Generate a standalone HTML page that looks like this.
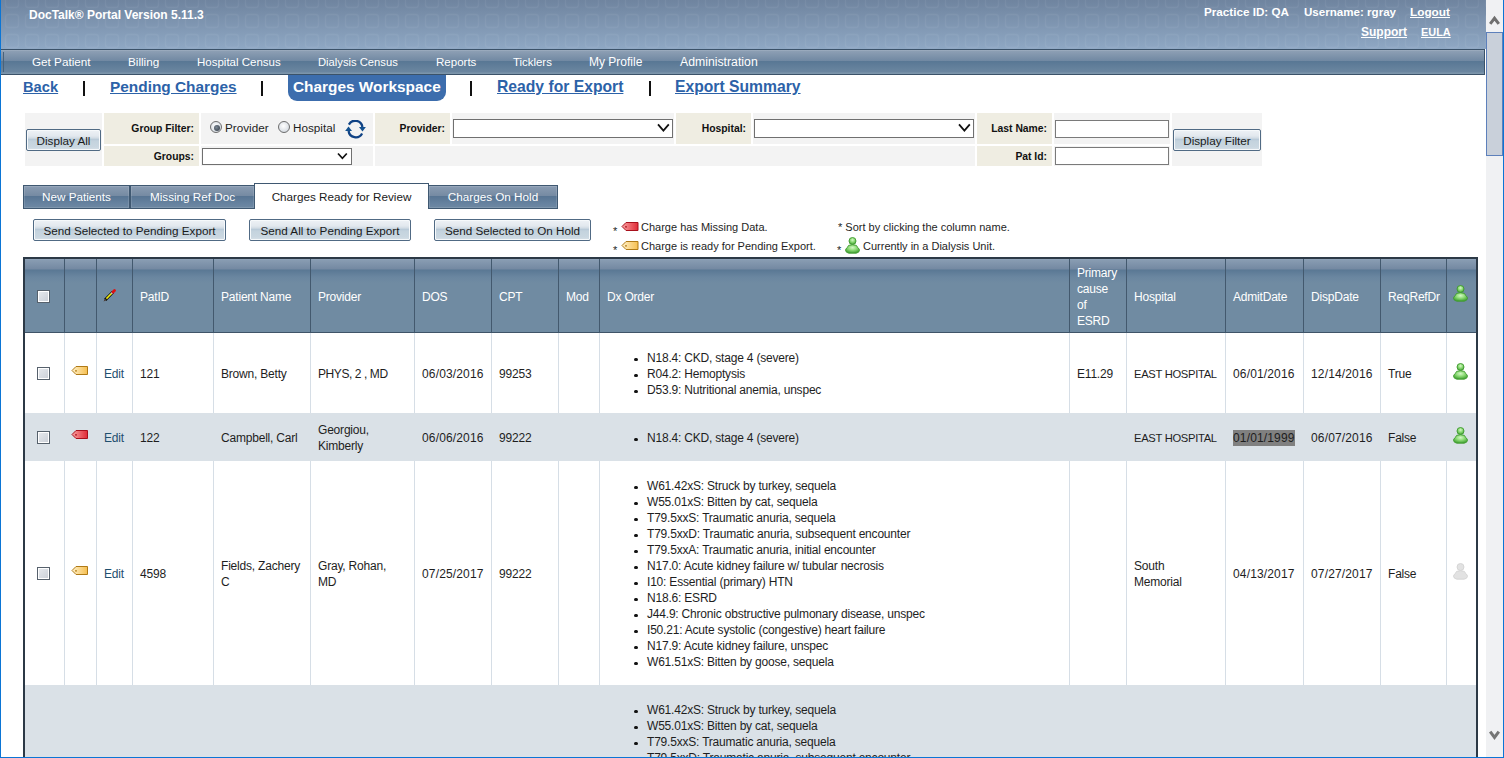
<!DOCTYPE html>
<html><head><meta charset="utf-8">
<style>
*{box-sizing:border-box;margin:0;padding:0}
html,body{width:1504px;height:758px;overflow:hidden;background:#fff;font-family:"Liberation Sans",sans-serif;color:#1e1e1e}
.a{position:absolute}
#win{position:absolute;left:0;top:0;width:1504px;height:758px;overflow:hidden}
#hdr{left:1px;top:0;width:1485px;height:49px;background:linear-gradient(#6f849f,#8fa8c4)}
#nav{left:1px;top:49px;width:1484px;height:26px;border-top:1px solid #3b5269;border-bottom:1px solid #3b5269;border-right:1px solid #3b5269;
 background:linear-gradient(#a5b4c5 0px,#8d9fb4 1px,#7088a2 11px,#587794 11px,#6b86a0 22px,#7c95ab 23px)}
.nav{top:55px;font-size:11.7px;color:#fff;white-space:nowrap;line-height:14px}
.hl{font-weight:bold;color:#fff;font-size:12px;white-space:nowrap;line-height:14px}
.lk{top:78px;font-size:15.4px;font-weight:bold;color:#2c62a8;text-decoration:underline;white-space:nowrap;line-height:18px}
.sep{top:77px;font-size:17px;font-weight:bold;color:#111;line-height:20px}
.cell{position:absolute;background:#f3f3f3}
.lab{position:absolute;background:#efede2;font-weight:bold;font-size:10.35px;text-align:right;color:#111;white-space:nowrap}
.sel{position:absolute;background:#fff;border:1px solid #707070}
.inp{position:absolute;background:#fff;border:1px solid #7a7a7a}
.btn{position:absolute;border:1px solid #506a84;border-radius:2px;padding-top:1px;box-shadow:inset 0 0 0 1px #f6f9fb;background:linear-gradient(#eef2f6 0px,#e2e8ee 6px,#d2dce5 8px,#b9cad8 9.5px,#c4d3de 11px,#cad7e1 17px,#d8e1e8 20px);color:#111;font-size:11.7px;color:#1a1a1a;text-align:center;white-space:nowrap}
.tab{position:absolute;top:185px;height:24px;border:1px solid #3f5871;background:linear-gradient(#8a9cb2 0px,#768ba3 9.5px,#587593 10.5px,#6783a0 18px,#6e89a2 22px);box-shadow:inset 0 0 0 1px rgba(255,255,255,0.13);color:#fff;font-size:11.7px;text-align:center;line-height:22px;white-space:nowrap}
.td,.th{font-size:12px;letter-spacing:-0.2px;line-height:16px;white-space:nowrap;color:#1e1e1e}
.th{color:#fff}
.bu{left:634px;width:3.6px;height:3.6px;border-radius:50%;background:#111}
.ed{color:#1f4f6e}
.cb{width:13px;height:13px;border:1px solid #56616c;box-shadow:inset 0 0 0 1px #fff;background:linear-gradient(135deg,#e8ebef,#c9ced6)}
.rad{width:12px;height:12px;border-radius:50%;border:1px solid #6d6d6d;background:radial-gradient(circle at 45% 40%,#ffffff,#c9d0d8)}
.fl{font-size:11.7px;color:#1e1e1e;white-space:nowrap;line-height:14px}
.leg{position:absolute;line-height:14px;font-size:11px;color:#1e1e1e;white-space:nowrap}
</style></head><body>
<div id="win">
<div class="a" id="hdr"></div>
<svg class="a" style="left:1px;top:0" width="1485" height="49"><defs><pattern id="hp" x="0" y="0" width="20" height="20" patternUnits="userSpaceOnUse"><rect x="4.5" y="14.5" width="13" height="13" rx="3" fill="none" stroke="rgba(255,255,255,0.05)" stroke-width="1.3"/><rect x="4.5" y="-5.5" width="13" height="13" rx="3" fill="none" stroke="rgba(255,255,255,0.05)" stroke-width="1.3"/></pattern></defs><rect width="1485" height="49" fill="url(#hp)"/></svg>
<div class="a hl" style="left:29px;top:8px">DocTalk® Portal Version 5.11.3</div>
<div class="a hl" style="left:1204px;top:5px;font-size:11.68px">Practice ID: QA</div>
<div class="a hl" style="left:1304px;top:5px;font-size:11.58px">Username: rgray</div>
<div class="a hl" style="left:1410px;top:5px;font-size:11.8px;text-decoration:underline">Logout</div>
<div class="a hl" style="left:1361px;top:25px;font-size:12px;text-decoration:underline">Support</div>
<div class="a hl" style="left:1421px;top:25px;font-size:10.9px;text-decoration:underline">EULA</div>

<div class="a" id="nav"></div>
<div class="a" style="left:3px;top:52px;width:1px;height:20px;background:#4a6279"></div>
<div class="a nav" style="left:32px">Get Patient</div>
<div class="a nav" style="left:128px">Billing</div>
<div class="a nav" style="left:197px;font-size:11.5px">Hospital Census</div>
<div class="a nav" style="left:318px;font-size:11.22px">Dialysis Census</div>
<div class="a nav" style="left:436px;font-size:11.54px">Reports</div>
<div class="a nav" style="left:513px;font-size:11.42px">Ticklers</div>
<div class="a nav" style="left:589px;font-size:12px">My Profile</div>
<div class="a nav" style="left:680px;font-size:12.28px">Administration</div>

<div class="a lk" style="left:23px;font-size:14.7px">Back</div>
<div class="a" style="left:83px;top:81px;width:2px;height:15px;background:#111"></div>
<div class="a lk" style="left:110px">Pending Charges</div>
<div class="a" style="left:261px;top:81px;width:2px;height:15px;background:#111"></div>
<div class="a" style="left:288px;top:75px;width:158px;height:26px;background:#3c6dad;border-radius:0 0 9px 9px"></div>
<div class="a lk" style="left:293px;color:#fff;text-decoration:none">Charges Workspace</div>
<div class="a" style="left:470px;top:81px;width:2px;height:15px;background:#111"></div>
<div class="a lk" style="left:497px;font-size:15.7px">Ready for Export</div>
<div class="a" style="left:649px;top:81px;width:2px;height:15px;background:#111"></div>
<div class="a lk" style="left:675px;font-size:15.7px">Export Summary</div>

<!-- filter table -->
<div class="cell" style="left:25px;top:113px;width:77px;height:53px"></div>
<div class="btn" style="left:26px;top:129px;width:75px;height:22px;line-height:20px">Display All</div>
<div class="lab" style="left:104px;top:113px;width:95px;height:31px;padding:10px 5px 0 0">Group Filter:</div>
<div class="cell" style="left:201px;top:113px;width:172px;height:31px"></div>
<div class="a rad" style="left:210px;top:121px"><div style="position:absolute;left:3px;top:3px;width:6px;height:6px;border-radius:50%;background:radial-gradient(circle at 40% 40%,#7b8794,#2d3640)"></div></div>
<div class="a fl" style="left:225px;top:121px">Provider</div>
<div class="a rad" style="left:278px;top:121px"></div>
<div class="a fl" style="left:293px;top:121px">Hospital</div>
<svg class="a" style="left:345px;top:120px" width="21" height="19" viewBox="0 0 21 19"><path d="M3.9 4.6 A7.2 7.2 0 0 1 17.4 7.0" fill="none" stroke="#0f4285" stroke-width="2.3"/><path d="M17.1 13.5 A7.2 7.2 0 0 1 3.6 11.0" fill="none" stroke="#0f4285" stroke-width="2.3"/><path d="M14.0 6.9 L20.9 6.9 L17.5 11.4 Z" fill="#12508f"/><path d="M0.1 11.1 L7.0 11.1 L3.5 6.6 Z" fill="#12508f"/></svg>
<div class="lab" style="left:104px;top:146px;width:95px;height:20px;padding:5px 5px 0 0">Groups:</div>
<div class="cell" style="left:201px;top:146px;width:172px;height:20px"></div>
<div class="sel" style="left:202px;top:148px;width:150px;height:17px"></div>
<svg class="a" style="left:337px;top:152px" width="11" height="9"><polyline points="1,1.5 5.4,6.3 9.8,1.5" fill="none" stroke="#111" stroke-width="1.7"/></svg>
<div class="lab" style="left:375px;top:113px;width:75px;height:31px;padding:10px 5px 0 0">Provider:</div>
<div class="cell" style="left:452px;top:113px;width:222px;height:31px"></div>
<div class="sel" style="left:453px;top:119px;width:220px;height:19px"></div>
<svg class="a" style="left:657px;top:123px" width="13" height="10"><polyline points="1,1.4 6.4,7.6 11.8,1.4" fill="none" stroke="#111" stroke-width="1.8"/></svg>
<div class="lab" style="left:676px;top:113px;width:75px;height:31px;padding:10px 5px 0 0">Hospital:</div>
<div class="cell" style="left:753px;top:113px;width:222px;height:31px"></div>
<div class="sel" style="left:754px;top:119px;width:220px;height:19px"></div>
<svg class="a" style="left:958px;top:123px" width="13" height="10"><polyline points="1,1.4 6.4,7.6 11.8,1.4" fill="none" stroke="#111" stroke-width="1.8"/></svg>
<div class="cell" style="left:375px;top:146px;width:600px;height:20px"></div>
<div class="lab" style="left:977px;top:113px;width:75px;height:31px;padding:10px 5px 0 0">Last Name:</div>
<div class="lab" style="left:977px;top:146px;width:75px;height:20px;padding:5px 5px 0 0">Pat Id:</div>
<div class="cell" style="left:1054px;top:113px;width:116px;height:31px"></div>
<div class="cell" style="left:1054px;top:146px;width:116px;height:20px"></div>
<div class="inp" style="left:1055px;top:120px;width:114px;height:18px"></div>
<div class="inp" style="left:1055px;top:147px;width:114px;height:18px"></div>
<div class="cell" style="left:1172px;top:113px;width:90px;height:53px"></div>
<div class="btn" style="left:1173px;top:129px;width:88px;height:22px;line-height:20px">Display Filter</div>

<!-- tabs -->
<div class="tab" style="left:23px;width:107px">New Patients</div>
<div class="tab" style="left:130px;width:125px">Missing Ref Doc</div>
<div class="a" style="left:254px;top:183px;width:175px;height:26px;border:1px solid #3f5871;border-bottom:none;background:#fff;color:#1a1a1a;font-size:11.7px;text-align:center;line-height:26px">Charges Ready for Review</div>
<div class="tab" style="left:428px;width:130px">Charges On Hold</div>

<div class="btn" style="left:33px;top:219px;width:193px;height:22px;line-height:20px">Send Selected to Pending Export</div>
<div class="btn" style="left:249px;top:219px;width:162px;height:22px;line-height:20px">Send All to Pending Export</div>
<div class="btn" style="left:434px;top:219px;width:157px;height:22px;line-height:20px">Send Selected to On Hold</div>

<div class="leg" style="left:613px;top:224px">*</div>
<div class="leg" style="left:613px;top:243px">*</div>
<svg class="a" style="left:621px;top:221px" width="18" height="11" viewBox="0 0 18 11"><defs><linearGradient id="lt1" x1="0" y1="0" x2="1" y2="0"><stop offset="0" stop-color="#f9a0a0"/><stop offset="1" stop-color="#e02a36"/></linearGradient></defs><path d="M1 5.5 L5 1.5 L17 1.5 L17 9.5 L5 9.5 Z" fill="url(#lt1)" stroke="#a8101c"/><circle cx="5" cy="5.8" r="0.9" fill="#a8101c"/></svg>
<svg class="a" style="left:621px;top:240px" width="18" height="11" viewBox="0 0 18 11"><defs><linearGradient id="lt2" x1="0" y1="0" x2="1" y2="0"><stop offset="0" stop-color="#fff0c8"/><stop offset="1" stop-color="#f6bf50"/></linearGradient></defs><path d="M1 5.5 L5 1.5 L17 1.5 L17 9.5 L5 9.5 Z" fill="url(#lt2)" stroke="#b07a16"/><circle cx="5" cy="5.8" r="0.9" fill="#b07a16"/></svg>
<div class="leg" style="left:641px;top:220px">Charge has Missing Data.</div>
<div class="leg" style="left:641px;top:239px">Charge is ready for Pending Export.</div>
<div class="leg" style="left:838px;top:220px">* Sort by clicking the column name.</div>
<div class="leg" style="left:837px;top:243px">*</div>
<svg class="a" style="left:845px;top:237px" width="15" height="17" viewBox="0 0 15 17"><defs><radialGradient id="lpg" cx="50%" cy="35%" r="60%"><stop offset="0" stop-color="#d6f7c8"/><stop offset="0.5" stop-color="#8fdc78"/><stop offset="1" stop-color="#4aa83a"/></radialGradient></defs><path d="M3.6 8.4 Q7.5 7 11.4 8.4 L12.8 10.6 Q14.6 12 14.5 13.4 Q14.2 15.6 11.2 16.2 L3.8 16.2 Q0.8 15.6 0.5 13.4 Q0.4 12 2.2 10.6 Z" fill="url(#lpg)" stroke="#3f9a30" stroke-width="0.9"/><circle cx="7.5" cy="4" r="3.5" fill="url(#lpg)" stroke="#3f9a30" stroke-width="0.9"/></svg>
<div class="leg" style="left:863px;top:239px">Currently in a Dialysis Unit.</div>

<!-- TABLE -->
<div class="a" style="left:23px;top:257px;width:1455px;height:2px;background:#2c3946"></div>
<div class="a" style="left:25px;top:259px;width:1451px;height:73px;background:linear-gradient(#93a6bb 0px,#889cb2 1px,#7489a2 10px,#5a7894 11px,#6a86a0 18px,#708ba2 24px,#708ba2 73px)"></div>
<div class="a" style="left:25px;top:332px;width:1451px;height:1px;background:#3f5468"></div>
<div class="a" style="left:23px;top:257px;width:2px;height:501px;background:#2c3946"></div>
<div class="a" style="left:1476px;top:257px;width:2px;height:501px;background:#2c3946"></div>
<div class="a" style="left:25px;top:333px;width:1451px;height:80px;background:#fff"></div>
<div class="a" style="left:25px;top:413px;width:1451px;height:48px;background:#dae1e7"></div>
<div class="a" style="left:25px;top:461px;width:1451px;height:224px;background:#fff"></div>
<div class="a" style="left:25px;top:685px;width:1451px;height:73px;background:#dae1e7"></div>
<div class="a" style="left:64px;top:259px;width:1px;height:73px;background:#43596e"></div>
<div class="a" style="left:96px;top:259px;width:1px;height:73px;background:#43596e"></div>
<div class="a" style="left:132px;top:259px;width:1px;height:73px;background:#43596e"></div>
<div class="a" style="left:213px;top:259px;width:1px;height:73px;background:#43596e"></div>
<div class="a" style="left:310px;top:259px;width:1px;height:73px;background:#43596e"></div>
<div class="a" style="left:414px;top:259px;width:1px;height:73px;background:#43596e"></div>
<div class="a" style="left:491px;top:259px;width:1px;height:73px;background:#43596e"></div>
<div class="a" style="left:558px;top:259px;width:1px;height:73px;background:#43596e"></div>
<div class="a" style="left:599px;top:259px;width:1px;height:73px;background:#43596e"></div>
<div class="a" style="left:1069px;top:259px;width:1px;height:73px;background:#43596e"></div>
<div class="a" style="left:1126px;top:259px;width:1px;height:73px;background:#43596e"></div>
<div class="a" style="left:1225px;top:259px;width:1px;height:73px;background:#43596e"></div>
<div class="a" style="left:1303px;top:259px;width:1px;height:73px;background:#43596e"></div>
<div class="a" style="left:1380px;top:259px;width:1px;height:73px;background:#43596e"></div>
<div class="a" style="left:1446px;top:259px;width:1px;height:73px;background:#43596e"></div>
<div class="a" style="left:64px;top:333px;width:1px;height:80px;background:#d6dee6"></div>
<div class="a" style="left:96px;top:333px;width:1px;height:80px;background:#d6dee6"></div>
<div class="a" style="left:132px;top:333px;width:1px;height:80px;background:#d6dee6"></div>
<div class="a" style="left:213px;top:333px;width:1px;height:80px;background:#d6dee6"></div>
<div class="a" style="left:310px;top:333px;width:1px;height:80px;background:#d6dee6"></div>
<div class="a" style="left:414px;top:333px;width:1px;height:80px;background:#d6dee6"></div>
<div class="a" style="left:491px;top:333px;width:1px;height:80px;background:#d6dee6"></div>
<div class="a" style="left:558px;top:333px;width:1px;height:80px;background:#d6dee6"></div>
<div class="a" style="left:599px;top:333px;width:1px;height:80px;background:#d6dee6"></div>
<div class="a" style="left:1069px;top:333px;width:1px;height:80px;background:#d6dee6"></div>
<div class="a" style="left:1126px;top:333px;width:1px;height:80px;background:#d6dee6"></div>
<div class="a" style="left:1225px;top:333px;width:1px;height:80px;background:#d6dee6"></div>
<div class="a" style="left:1303px;top:333px;width:1px;height:80px;background:#d6dee6"></div>
<div class="a" style="left:1380px;top:333px;width:1px;height:80px;background:#d6dee6"></div>
<div class="a" style="left:1446px;top:333px;width:1px;height:80px;background:#d6dee6"></div>
<div class="a" style="left:64px;top:461px;width:1px;height:224px;background:#d6dee6"></div>
<div class="a" style="left:96px;top:461px;width:1px;height:224px;background:#d6dee6"></div>
<div class="a" style="left:132px;top:461px;width:1px;height:224px;background:#d6dee6"></div>
<div class="a" style="left:213px;top:461px;width:1px;height:224px;background:#d6dee6"></div>
<div class="a" style="left:310px;top:461px;width:1px;height:224px;background:#d6dee6"></div>
<div class="a" style="left:414px;top:461px;width:1px;height:224px;background:#d6dee6"></div>
<div class="a" style="left:491px;top:461px;width:1px;height:224px;background:#d6dee6"></div>
<div class="a" style="left:558px;top:461px;width:1px;height:224px;background:#d6dee6"></div>
<div class="a" style="left:599px;top:461px;width:1px;height:224px;background:#d6dee6"></div>
<div class="a" style="left:1069px;top:461px;width:1px;height:224px;background:#d6dee6"></div>
<div class="a" style="left:1126px;top:461px;width:1px;height:224px;background:#d6dee6"></div>
<div class="a" style="left:1225px;top:461px;width:1px;height:224px;background:#d6dee6"></div>
<div class="a" style="left:1303px;top:461px;width:1px;height:224px;background:#d6dee6"></div>
<div class="a" style="left:1380px;top:461px;width:1px;height:224px;background:#d6dee6"></div>
<div class="a" style="left:1446px;top:461px;width:1px;height:224px;background:#d6dee6"></div>
<div class="a th" style="left:140px;top:289px;">PatID</div>
<div class="a th" style="left:221px;top:289px;">Patient Name</div>
<div class="a th" style="left:318px;top:289px;">Provider</div>
<div class="a th" style="left:422px;top:289px;">DOS</div>
<div class="a th" style="left:499px;top:289px;">CPT</div>
<div class="a th" style="left:566px;top:289px;">Mod</div>
<div class="a th" style="left:607px;top:289px;">Dx Order</div>
<div class="a th" style="left:1134px;top:289px;">Hospital</div>
<div class="a th" style="left:1233px;top:289px;">AdmitDate</div>
<div class="a th" style="left:1311px;top:289px;">DispDate</div>
<div class="a th" style="left:1388px;top:289px;">ReqRefDr</div>
<div class="a th" style="left:1077px;top:265px;">Primary<br>cause<br>of<br>ESRD</div>
<div class="a cb" style="left:37px;top:290px"></div>
<svg class="a" style="left:98px;top:282px" width="24" height="24" viewBox="0 0 24 24"><line x1="7.2" y1="17.8" x2="15" y2="10" stroke="#0a0a0a" stroke-width="3.1"/><line x1="8.4" y1="16.6" x2="13.6" y2="11.4" stroke="#f2ec10" stroke-width="1.5"/><line x1="13.4" y1="11.6" x2="14.9" y2="10.1" stroke="#e6dcf0" stroke-width="1.6"/><line x1="15" y1="10" x2="16.5" y2="8.5" stroke="#e01010" stroke-width="2.9" stroke-linecap="round"/><path d="M5.6 19.4 L6.9 16.4 L8.6 18.1 Z" fill="#4a3a30"/></svg>
<svg class="a" style="left:1453px;top:285px" width="15" height="17" viewBox="0 0 15 17"><defs><radialGradient id="pg1" cx="50%" cy="35%" r="60%"><stop offset="0" stop-color="#d6f7c8"/><stop offset="0.5" stop-color="#8fdc78"/><stop offset="1" stop-color="#4aa83a"/></radialGradient></defs><path d="M3.6 8.4 Q7.5 7 11.4 8.4 L12.8 10.6 Q14.6 12 14.5 13.4 Q14.2 15.6 11.2 16.2 L3.8 16.2 Q0.8 15.6 0.5 13.4 Q0.4 12 2.2 10.6 Z" fill="url(#pg1)" stroke="#3f9a30" stroke-width="0.9"/><circle cx="7.5" cy="4" r="3.5" fill="url(#pg1)" stroke="#3f9a30" stroke-width="0.9"/></svg>
<div class="a cb" style="left:37px;top:367px"></div>
<svg class="a" style="left:71px;top:365px" width="17" height="11" viewBox="0 0 17 11"><defs><linearGradient id="tg2" x1="0" y1="0" x2="1" y2="0"><stop offset="0" stop-color="#fff0c8"/><stop offset="1" stop-color="#f6bf50"/></linearGradient></defs><path d="M1 5.5 L5 1.5 L16.5 1.5 L16.5 9.5 L5 9.5 Z" fill="url(#tg2)" stroke="#b07a16" stroke-width="1"/><circle cx="5" cy="5.8" r="0.9" fill="#b07a16"/></svg>
<div class="a td ed" style="left:104px;top:366px;">Edit</div>
<div class="a td" style="left:140px;top:366px;">121</div>
<div class="a td" style="left:221px;top:366px;">Brown, Betty</div>
<div class="a td" style="left:318px;top:366px;letter-spacing:-0.42px;">PHYS, 2 , MD</div>
<div class="a td" style="left:422px;top:366px;letter-spacing:0.15px;">06/03/2016</div>
<div class="a td" style="left:499px;top:366px;">99253</div>
<div class="a td" style="left:1077px;top:366px;">E11.29</div>
<div class="a td" style="left:1134px;top:366px;font-size:11.2px;letter-spacing:-0.3px;">EAST HOSPITAL</div>
<div class="a td" style="left:1233px;top:366px;letter-spacing:0.15px;">06/01/2016</div>
<div class="a td" style="left:1311px;top:366px;letter-spacing:0.15px;">12/14/2016</div>
<div class="a td" style="left:1388px;top:366px;">True</div>
<div class="a bu" style="top:357.6px"></div>
<div class="a td" style="left:647px;top:350px;">N18.4: CKD, stage 4 (severe)</div>
<div class="a bu" style="top:373.6px"></div>
<div class="a td" style="left:647px;top:366px;">R04.2: Hemoptysis</div>
<div class="a bu" style="top:389.6px"></div>
<div class="a td" style="left:647px;top:382px;">D53.9: Nutritional anemia, unspec</div>
<svg class="a" style="left:1453px;top:363px" width="15" height="17" viewBox="0 0 15 17"><defs><radialGradient id="pg3" cx="50%" cy="35%" r="60%"><stop offset="0" stop-color="#d6f7c8"/><stop offset="0.5" stop-color="#8fdc78"/><stop offset="1" stop-color="#4aa83a"/></radialGradient></defs><path d="M3.6 8.4 Q7.5 7 11.4 8.4 L12.8 10.6 Q14.6 12 14.5 13.4 Q14.2 15.6 11.2 16.2 L3.8 16.2 Q0.8 15.6 0.5 13.4 Q0.4 12 2.2 10.6 Z" fill="url(#pg3)" stroke="#3f9a30" stroke-width="0.9"/><circle cx="7.5" cy="4" r="3.5" fill="url(#pg3)" stroke="#3f9a30" stroke-width="0.9"/></svg>
<div class="a cb" style="left:37px;top:431px"></div>
<svg class="a" style="left:71px;top:429px" width="17" height="11" viewBox="0 0 17 11"><defs><linearGradient id="tg4" x1="0" y1="0" x2="1" y2="0"><stop offset="0" stop-color="#f9a0a0"/><stop offset="1" stop-color="#e02a36"/></linearGradient></defs><path d="M1 5.5 L5 1.5 L16.5 1.5 L16.5 9.5 L5 9.5 Z" fill="url(#tg4)" stroke="#a8101c" stroke-width="1"/><circle cx="5" cy="5.8" r="0.9" fill="#a8101c"/></svg>
<div class="a td ed" style="left:104px;top:430px;">Edit</div>
<div class="a td" style="left:140px;top:430px;">122</div>
<div class="a td" style="left:221px;top:430px;">Campbell, Carl</div>
<div class="a td" style="left:318px;top:422px;">Georgiou,<br>Kimberly</div>
<div class="a td" style="left:422px;top:430px;letter-spacing:0.15px;">06/06/2016</div>
<div class="a td" style="left:499px;top:430px;">99222</div>
<div class="a td" style="left:1134px;top:430px;font-size:11.2px;letter-spacing:-0.3px;">EAST HOSPITAL</div>
<div class="a td" style="left:1233px;top:430px;letter-spacing:0.15px;"><span style="background:#808080;display:inline-block;height:16px">01/01/1999</span></div>
<div class="a td" style="left:1311px;top:430px;letter-spacing:0.15px;">06/07/2016</div>
<div class="a td" style="left:1388px;top:430px;">False</div>
<div class="a bu" style="top:437.6px"></div>
<div class="a td" style="left:647px;top:430px;">N18.4: CKD, stage 4 (severe)</div>
<svg class="a" style="left:1453px;top:427px" width="15" height="17" viewBox="0 0 15 17"><defs><radialGradient id="pg5" cx="50%" cy="35%" r="60%"><stop offset="0" stop-color="#d6f7c8"/><stop offset="0.5" stop-color="#8fdc78"/><stop offset="1" stop-color="#4aa83a"/></radialGradient></defs><path d="M3.6 8.4 Q7.5 7 11.4 8.4 L12.8 10.6 Q14.6 12 14.5 13.4 Q14.2 15.6 11.2 16.2 L3.8 16.2 Q0.8 15.6 0.5 13.4 Q0.4 12 2.2 10.6 Z" fill="url(#pg5)" stroke="#3f9a30" stroke-width="0.9"/><circle cx="7.5" cy="4" r="3.5" fill="url(#pg5)" stroke="#3f9a30" stroke-width="0.9"/></svg>
<div class="a cb" style="left:37px;top:567px"></div>
<svg class="a" style="left:71px;top:565px" width="17" height="11" viewBox="0 0 17 11"><defs><linearGradient id="tg6" x1="0" y1="0" x2="1" y2="0"><stop offset="0" stop-color="#fff0c8"/><stop offset="1" stop-color="#f6bf50"/></linearGradient></defs><path d="M1 5.5 L5 1.5 L16.5 1.5 L16.5 9.5 L5 9.5 Z" fill="url(#tg6)" stroke="#b07a16" stroke-width="1"/><circle cx="5" cy="5.8" r="0.9" fill="#b07a16"/></svg>
<div class="a td ed" style="left:104px;top:566px;">Edit</div>
<div class="a td" style="left:140px;top:566px;">4598</div>
<div class="a td" style="left:221px;top:558px;">Fields, Zachery<br>C</div>
<div class="a td" style="left:318px;top:558px;">Gray, Rohan,<br>MD</div>
<div class="a td" style="left:422px;top:566px;letter-spacing:0.15px;">07/25/2017</div>
<div class="a td" style="left:499px;top:566px;">99222</div>
<div class="a td" style="left:1134px;top:558px;">South<br>Memorial</div>
<div class="a td" style="left:1233px;top:566px;letter-spacing:0.15px;">04/13/2017</div>
<div class="a td" style="left:1311px;top:566px;letter-spacing:0.15px;">07/27/2017</div>
<div class="a td" style="left:1388px;top:566px;">False</div>
<div class="a bu" style="top:485.6px"></div>
<div class="a td" style="left:647px;top:478px;">W61.42xS: Struck by turkey, sequela</div>
<div class="a bu" style="top:501.6px"></div>
<div class="a td" style="left:647px;top:494px;">W55.01xS: Bitten by cat, sequela</div>
<div class="a bu" style="top:517.6px"></div>
<div class="a td" style="left:647px;top:510px;">T79.5xxS: Traumatic anuria, sequela</div>
<div class="a bu" style="top:533.6px"></div>
<div class="a td" style="left:647px;top:526px;">T79.5xxD: Traumatic anuria, subsequent encounter</div>
<div class="a bu" style="top:549.6px"></div>
<div class="a td" style="left:647px;top:542px;">T79.5xxA: Traumatic anuria, initial encounter</div>
<div class="a bu" style="top:565.6px"></div>
<div class="a td" style="left:647px;top:558px;">N17.0: Acute kidney failure w/ tubular necrosis</div>
<div class="a bu" style="top:581.6px"></div>
<div class="a td" style="left:647px;top:574px;">I10: Essential (primary) HTN</div>
<div class="a bu" style="top:597.6px"></div>
<div class="a td" style="left:647px;top:590px;">N18.6: ESRD</div>
<div class="a bu" style="top:613.6px"></div>
<div class="a td" style="left:647px;top:606px;">J44.9: Chronic obstructive pulmonary disease, unspec</div>
<div class="a bu" style="top:629.6px"></div>
<div class="a td" style="left:647px;top:622px;">I50.21: Acute systolic (congestive) heart failure</div>
<div class="a bu" style="top:645.6px"></div>
<div class="a td" style="left:647px;top:638px;">N17.9: Acute kidney failure, unspec</div>
<div class="a bu" style="top:661.6px"></div>
<div class="a td" style="left:647px;top:654px;">W61.51xS: Bitten by goose, sequela</div>
<svg class="a" style="left:1453px;top:563px" width="15" height="17" viewBox="0 0 15 17"><path d="M3.6 8.4 Q7.5 7 11.4 8.4 L12.8 10.6 Q14.6 12 14.5 13.4 Q14.2 15.6 11.2 16.2 L3.8 16.2 Q0.8 15.6 0.5 13.4 Q0.4 12 2.2 10.6 Z" fill="#e2e2e2" stroke="#d0d0d0" stroke-width="0.8"/><circle cx="7.5" cy="4" r="3.5" fill="#e2e2e2" stroke="#d0d0d0" stroke-width="0.8"/></svg>
<div class="a bu" style="top:709.6px"></div>
<div class="a td" style="left:647px;top:702px;">W61.42xS: Struck by turkey, sequela</div>
<div class="a bu" style="top:725.6px"></div>
<div class="a td" style="left:647px;top:718px;">W55.01xS: Bitten by cat, sequela</div>
<div class="a bu" style="top:741.6px"></div>
<div class="a td" style="left:647px;top:734px;">T79.5xxS: Traumatic anuria, sequela</div>
<div class="a bu" style="top:757.6px"></div>
<div class="a td" style="left:647px;top:750px;">T79.5xxD: Traumatic anuria, subsequent encounter</div>
<!-- scrollbar -->
<div class="a" style="left:1486px;top:0;width:17px;height:758px;background:#f0f1f3"></div>
<div class="a" style="left:1486px;top:32px;width:17px;height:124px;background:#c9d0da;border:1px solid #5d80bb"></div>
<svg class="a" style="left:1486px;top:12px" width="17" height="16"><polyline points="4.2,11.8 8.5,6.3 12.8,11.8" fill="none" stroke="#6f6f6f" stroke-width="3" stroke-linejoin="miter"/></svg>
<svg class="a" style="left:1486px;top:727px" width="17" height="16"><polyline points="4.2,4.7 8.5,10.4 12.8,4.7" fill="none" stroke="#757575" stroke-width="3" stroke-linejoin="miter"/></svg>
<div class="a" style="left:0;top:0;width:1px;height:758px;background:#0b75d5"></div>
<div class="a" style="left:1503px;top:0;width:1px;height:758px;background:#0b75d5"></div>
<div class="a" style="left:0;top:757px;width:1504px;height:1px;background:#0b75d5"></div>
</div>
</body></html>
